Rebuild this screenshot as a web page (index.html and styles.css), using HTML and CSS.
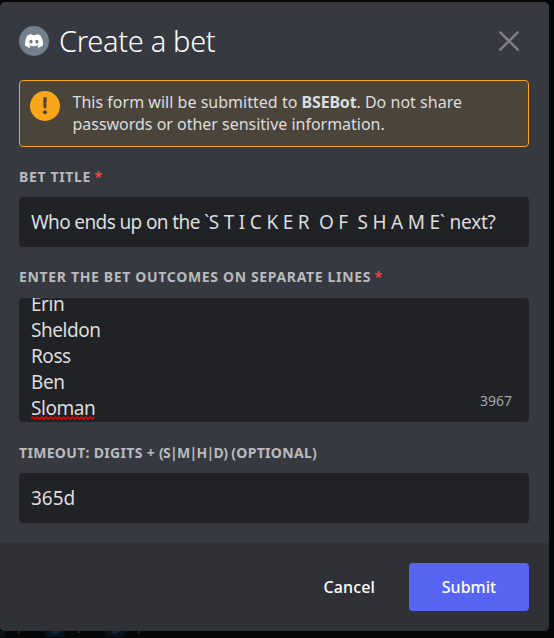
FILE: index.html
```html
<!DOCTYPE html>
<html lang="en">
<head>
<meta charset="utf-8">
<title>Create a bet</title>
<link rel="stylesheet" href="styles.css">
</head>
<body>
<main class="modal">
  <header class="header">
    <svg class="avatar" viewBox="0 0 30 30" aria-hidden="true">
      <circle cx="15" cy="15" r="15" fill="#747f8d"/>
      <g transform="translate(5.9 8.1) scale(.143)"><path fill="#fff" d="M107.7 8.07A105.15 105.15 0 0 0 81.47 0a72.06 72.06 0 0 0-3.36 6.83 97.68 97.68 0 0 0-29.11 0A72.37 72.37 0 0 0 45.64 0a105.89 105.89 0 0 0-26.25 8.09C2.79 32.65-1.71 56.6.54 80.21a105.73 105.73 0 0 0 32.17 16.15 77.7 77.7 0 0 0 6.89-11.11 68.42 68.42 0 0 1-10.85-5.18l2.66-2.06a75.57 75.57 0 0 0 64.32 0l2.66 2.06a68.68 68.68 0 0 1-10.87 5.19 77 77 0 0 0 6.89 11.1 105.25 105.25 0 0 0 32.19-16.14c2.64-27.38-4.51-51.11-18.9-72.15ZM42.45 65.69C36.18 65.69 31 60 31 53s5-12.74 11.43-12.74S54 46 53.89 53s-5.05 12.69-11.44 12.69Zm42.24 0C78.41 65.69 73.25 60 73.25 53s5-12.74 11.44-12.74S96.23 46 96.12 53s-5.04 12.69-11.43 12.69Z"/></g>
    </svg>
    <h1 class="title">Create a bet</h1>
    <svg class="close" viewBox="0 0 20 20" aria-hidden="true"><path d="M1.3 1.3 18.7 18.7M18.7 1.3 1.3 18.7"/></svg>
  </header>
  <section class="notice">
    <svg class="warning" viewBox="0 0 30 30" aria-hidden="true"><circle cx="15" cy="15" r="15" fill="#faa61a"/><path fill="#4b443b" d="M13.3 6.3h3.4l-.4 11h-2.6z"/><circle cx="15" cy="21.2" r="2" fill="#4b443b"/></svg>
    <p class="notice-text"><span class="line line-first">This form will be submitted to <strong>BSEBot</strong>. Do not share</span><span class="line">passwords or other sensitive information.</span></p>
  </section>
  <div class="field">
    <div class="label">Bet title <span class="required">*</span></div>
    <div class="input"><span class="who">Who ends up on the `</span><span class="sticker">S T I C K E R &nbsp;O F &nbsp;S H A M E</span><span class="next">` next?</span></div>
  </div>
  <div class="field field-outcomes">
    <div class="label">Enter the bet outcomes on separate lines <span class="required">*</span></div>
    <div class="outcomes">
      <div class="lines"><div>Erin</div><div>Sheldon</div><div>Ross</div><div>Ben</div><div class="misspelled">Sloman<svg class="squiggle" viewBox="0 0 64 4" aria-hidden="true"><path d="M0 3 2 1 4.2 3 6.4 1 8.6 3 10.8 1 13 3 15.2 1 17.4 3 19.6 1 21.8 3 24 1 26.2 3 28.4 1 30.6 3 32.8 1 35 3 37.2 1 39.4 3 41.6 1 43.8 3 46 1 48.2 3 50.4 1 52.6 3 54.8 1 57 3 59.2 1 61.4 3 63.6 1"/></svg></div></div>
      <span class="count">3967</span>
    </div>
  </div>
  <div class="field">
    <div class="label label-timeout">Timeout: digits + <span class="units">(s|m|h|d)</span> (optional)</div>
    <div class="input">365d</div>
  </div>
  <footer class="footer"><span class="cancel">Cancel</span><span class="submit">Submit</span></footer>
</main>
<div class="backdrop"><i class="tile tile-cut"></i><b class="mark"></b><i class="tile"></i><b class="mark"></b><i class="tile"></i><b class="mark"></b></div>
</body>
</html>
```
FILE: styles.css
```css
* { box-sizing: border-box; }
body { margin: 0; padding-top: 2px; height: 638px; overflow: hidden; background: #070707; font-family: "Noto Sans", sans-serif; color: #dcddde; }
.modal { width: 549px; height: 629px; background: #36393f; border-radius: 5px; overflow: hidden; display: flex; flex-direction: column; }
.header { height: 78px; padding: 0 30px 0 19px; display: flex; align-items: center; flex: none; }
.avatar { width: 30px; height: 30px; }
.title { margin: 0 auto 0 10px; color: #fff; font-size: 29px; font-weight: 300; line-height: 36px; letter-spacing: -.32px; }
.close { width: 20px; height: 20px; fill: none; stroke: #7e8084; stroke-width: 2.4; stroke-linecap: round; }
.notice { margin: 0 20px 0 19px; width: 510px; height: 67px; flex: none; border: 1px solid #faa61a; border-radius: 4px; background: #4b443b; padding: 10px; display: flex; gap: 12.5px; }
.warning { width: 30px; height: 30px; flex: none; }
.notice-text { margin: 0; font-size: 16px; line-height: 22px; letter-spacing: -.02px; white-space: nowrap; }
.notice-text strong { letter-spacing: -.2px; }
.line { display: block; }
.line-first { letter-spacing: .02px; }
.field { margin: 20px 20px 0 19px; width: 510px; flex: none; }
.label { height: 20px; margin-bottom: 10px; color: #b9bbbe; font-size: 14px; font-weight: 700; line-height: 20px; letter-spacing: .66px; text-transform: uppercase; white-space: nowrap; }
.label-timeout { letter-spacing: .32px; }
.units { letter-spacing: -.7px; }
.required { color: #ed4245; margin-left: -1px; }
.input { height: 50px; background: #202225; border-radius: 4px; padding: 0 12px; font-size: 19px; line-height: 50px; white-space: nowrap; }
.who { letter-spacing: -.62px; }
.sticker { letter-spacing: -.2px; }
.next { letter-spacing: -.25px; }
.field-outcomes .label { margin-bottom: 11px; }
.outcomes { height: 124px; background: #202225; border-radius: 4px; overflow: hidden; padding: 0 17px 0 12px; margin-bottom: 1px; display: flex; justify-content: space-between; align-items: flex-end; font-size: 19px; line-height: 26px; letter-spacing: -.45px; }
.lines { height: 124px; padding-bottom: 1px; display: flex; flex-direction: column; justify-content: flex-end; }
.misspelled { position: relative; }
.squiggle { position: absolute; left: 0; bottom: 1px; width: 64px; height: 4px; fill: none; stroke: #f00; stroke-width: 1.3; }
.count { padding-bottom: 11px; color: #a3a6aa; font-size: 14px; line-height: 20px; letter-spacing: 0; }
.footer { margin-top: auto; height: 88px; flex: none; background: #2f3136; padding: 0 20px; display: flex; align-items: center; justify-content: flex-end; color: #fff; font-size: 16px; font-weight: 500; }
.cancel { margin-right: 34px; letter-spacing: .15px; }
.submit { width: 120px; height: 48px; line-height: 48px; text-align: center; background: #5865f2; border-radius: 4px; }
.backdrop { display: flex; height: 6px; }
.tile { flex: none; width: 20px; height: 6px; margin-left: 26px; background: #07131d; border-radius: 0 0 3px 3px; }
.tile::before { content: ""; display: block; width: 8px; height: 3px; margin: 0 auto; background: #1b2329; border-radius: 0 0 4px 4px; }
.tile-cut { width: 5px; margin-left: 0; }
.tile-cut::before { display: none; }
.mark { width: 2px; height: 2px; margin: 0 -1px 0 13px; background: #232324; }
```
